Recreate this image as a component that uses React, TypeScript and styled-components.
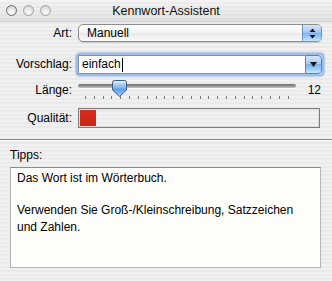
import React from "react";
import styled, { createGlobalStyle } from "styled-components";

const Global = createGlobalStyle`
  html, body { margin: 0; padding: 0; }
  body {
    font-family: "Liberation Sans", Arial, sans-serif;
    font-size: 12px;
    color: #000;
  }
`;

const Window = styled.div`
  width: 332px;
  height: 281px;
  overflow: hidden;
  display: flex;
  flex-direction: column;
  background: repeating-linear-gradient(
    to bottom,
    #f1f1f1 0px,
    #f1f1f1 2px,
    #eaeaea 2px,
    #eaeaea 4px
  );
`;

const TitleBar = styled.div`
  height: 22px;
  flex: none;
  display: flex;
  align-items: center;
  background: linear-gradient(to bottom, rgba(255,255,255,0.2), rgba(0,0,0,0.05));
  border-bottom: 1px solid #d0d0d0;
  box-sizing: border-box;
`;

const Lights = styled.div`
  width: 58px;
  display: flex;
  gap: 6px;
  padding-left: 6px;
  box-sizing: border-box;
`;

const Light = styled.span<{ $dark?: boolean }>`
  width: 11px;
  height: 11px;
  border-radius: 50%;
  box-sizing: border-box;
  border: 1px solid ${(p) => (p.$dark ? "#6d6d6d" : "#a2a2a2")};
  background: radial-gradient(circle at 50% 70%, #fdfdfd 0%, #e4e4e4 55%, #c4c4c4 100%);
`;

const Title = styled.div`
  flex: 1;
  text-align: center;
  font-size: 12.5px;
  padding-right: 58px;
  color: #111;
`;

const Form = styled.div`
  display: grid;
  grid-template-columns: 62px 1fr;
  column-gap: 6px;
  padding: 0 10px;
  align-items: center;
`;

const Label = styled.div<{ $mt: number; $h: number }>`
  text-align: right;
  margin-top: ${(p) => p.$mt}px;
  height: ${(p) => p.$h}px;
  line-height: ${(p) => p.$h}px;
  white-space: nowrap;
`;

const Cell = styled.div<{ $mt: number; $h: number }>`
  margin-top: ${(p) => p.$mt}px;
  height: ${(p) => p.$h}px;
  display: flex;
  align-items: center;
  position: relative;
`;

const Popup = styled.div`
  flex: 1;
  height: 18px;
  display: flex;
  border: 1px solid #8d8d8d;
  border-radius: 5px;
  overflow: hidden;
  box-sizing: border-box;
  background: linear-gradient(to bottom, #ffffff 0%, #f4f4f4 50%, #e9e9e9 51%, #fafafa 100%);
  box-shadow: 0 1px 1px rgba(0,0,0,0.15);
`;

const PopupText = styled.div`
  flex: 1;
  padding-left: 8px;
  line-height: 16px;
`;

const AquaButton = styled.div<{ $w: number }>`
  width: ${(p) => p.$w}px;
  display: flex;
  align-items: center;
  justify-content: center;
  border-left: 1px solid #6a8fc4;
  background: linear-gradient(
    to bottom,
    #d3e6fa 0%,
    #a7cbf2 45%,
    #7fb2ea 50%,
    #9fd0fa 80%,
    #c8eaff 100%
  );
`;

const Combo = styled.div`
  flex: 1;
  height: 19px;
  display: flex;
  border-radius: 2px;
  box-shadow: 0 0 0 2px #9fbde6, 0 0 1px 3px rgba(130, 170, 225, 0.5);
`;

const Field = styled.div`
  flex: 1;
  background: #fff;
  border: 1px solid #7f8fa8;
  border-right: none;
  box-sizing: border-box;
  padding-left: 3px;
  line-height: 17px;
  display: flex;
  align-items: center;
`;

const Caret = styled.span`
  display: inline-block;
  width: 1px;
  height: 14px;
  background: #000;
  margin-left: 1px;
`;

const ComboButton = styled(AquaButton)`
  border: 1px solid #5d82b8;
  border-radius: 0 4px 4px 0;
`;

const SliderRow = styled.div`
  flex: 1;
  display: flex;
  align-items: center;
  justify-content: space-between;
`;

const Slider = styled.div`
  width: 218px;
  height: 21px;
  position: relative;
  display: flex;
  flex-direction: column;
`;

const Track = styled.div`
  margin-top: 5px;
  height: 4px;
  border-radius: 2px;
  background: linear-gradient(to bottom, #6e6e6e, #9a9a9a 60%, #c9c9c9);
  box-shadow: 0 1px 0 rgba(255,255,255,0.7);
`;

const Ticks = styled.div`
  margin-top: 8px;
  display: flex;
  justify-content: space-between;
  padding: 0 7px;
`;

const Tick = styled.span`
  width: 1px;
  height: 3px;
  background: #7a7a7a;
`;

const Thumb = styled.svg`
  position: absolute;
  top: 1px;
`;

const Value = styled.div`
  padding-right: 1px;
`;

const Meter = styled.div`
  flex: 1;
  height: 20px;
  margin-right: 2px;
  border: 1px solid #7c7c7c;
  box-sizing: border-box;
  padding: 1px;
  display: flex;
  box-shadow: inset 0 0 0 1px rgba(0,0,0,0.06);
`;

const MeterFill = styled.div`
  height: 100%;
  background: linear-gradient(to bottom, #d42b1f, #cf2519);
`;

const Separator = styled.div`
  margin-top: 11px;
  height: 1px;
  background: #8e8e8e;
  box-shadow: 0 1px 0 #f8f8f8;
`;

const TipsLabel = styled.div`
  margin: 7px 0 0 10px;
  height: 16px;
  line-height: 16px;
`;

const TipsBox = styled.div`
  margin: 4px 11px 0 10px;
  height: 101px;
  box-sizing: border-box;
  background: #fffefb;
  border: 1px solid #b4b4b4;
  border-top-color: #8a8a8a;
  padding: 2px 6px;
  line-height: 16.3px;
`;

const Para = styled.p`
  margin: 0;
`;

const Blank = styled.div`
  height: 16px;
`;

const UpDown = () => (
  <svg width="7" height="11" viewBox="0 0 7 11">
    <path d="M3.5 0.5 L6.5 4 L0.5 4 Z" fill="#111" />
    <path d="M3.5 10.5 L6.5 7 L0.5 7 Z" fill="#111" />
  </svg>
);

const Down = () => (
  <svg width="7" height="5" viewBox="0 0 7 5">
    <path d="M0 0 L7 0 L3.5 5 Z" fill="#111" />
  </svg>
);

const TICKS = 24;
const VALUE = 12;
const MIN = 8;

export default function App() {
  const index = VALUE - MIN;
  const thumbLeft = 7 + (index * 204) / (TICKS - 1) - 8;
  return (
    <Window>
      <Global />
      <TitleBar>
        <Lights>
          <Light $dark />
          <Light />
          <Light />
        </Lights>
        <Title>Kennwort-Assistent</Title>
      </TitleBar>
      <Form>
        <Label $mt={2} $h={18}>Art:</Label>
        <Cell $mt={2} $h={18}>
          <Popup>
            <PopupText>Manuell</PopupText>
            <AquaButton $w={18}>
              <UpDown />
            </AquaButton>
          </Popup>
        </Cell>

        <Label $mt={12} $h={21}>Vorschlag:</Label>
        <Cell $mt={12} $h={21}>
          <Combo>
            <Field>
              einfach<Caret />
            </Field>
            <ComboButton $w={15}>
              <Down />
            </ComboButton>
          </Combo>
        </Cell>

        <Label $mt={4} $h={16}>Länge:</Label>
        <Cell $mt={4} $h={21}>
          <SliderRow>
            <Slider>
              <Track />
              <Ticks>
                {Array.from({ length: TICKS }).map((_, i) => (
                  <Tick key={i} />
                ))}
              </Ticks>
              <Thumb
                width="15"
                height="17"
                viewBox="0 0 15 17"
                style={{ left: thumbLeft }}
              >
                <defs>
                  <linearGradient id="tg" x1="0" y1="0" x2="0" y2="1">
                    <stop offset="0" stopColor="#cfe4fb" />
                    <stop offset="0.45" stopColor="#8ab9ee" />
                    <stop offset="0.55" stopColor="#5f9be3" />
                    <stop offset="1" stopColor="#a8d4fb" />
                  </linearGradient>
                </defs>
                <path
                  d="M2.5 0.5 H12.5 Q14.5 0.5 14.5 2.5 V10 L7.5 16.5 L0.5 10 V2.5 Q0.5 0.5 2.5 0.5 Z"
                  fill="url(#tg)"
                  stroke="#3d5f8f"
                  strokeWidth="1"
                />
                <path d="M2 2 H13" stroke="#eef6ff" strokeWidth="1" />
              </Thumb>
            </Slider>
            <Value>{VALUE}</Value>
          </SliderRow>
        </Cell>

        <Label $mt={8} $h={20}>Qualität:</Label>
        <Cell $mt={8} $h={20}>
          <Meter>
            <MeterFill style={{ width: 16 }} />
          </Meter>
        </Cell>
      </Form>
      <Separator />
      <TipsLabel>Tipps:</TipsLabel>
      <TipsBox>
        <Para>Das Wort ist im Wörterbuch.</Para>
        <Blank />
        <Para>Verwenden Sie Groß-/Kleinschreibung, Satzzeichen und Zahlen.</Para>
      </TipsBox>
    </Window>
  );
}
